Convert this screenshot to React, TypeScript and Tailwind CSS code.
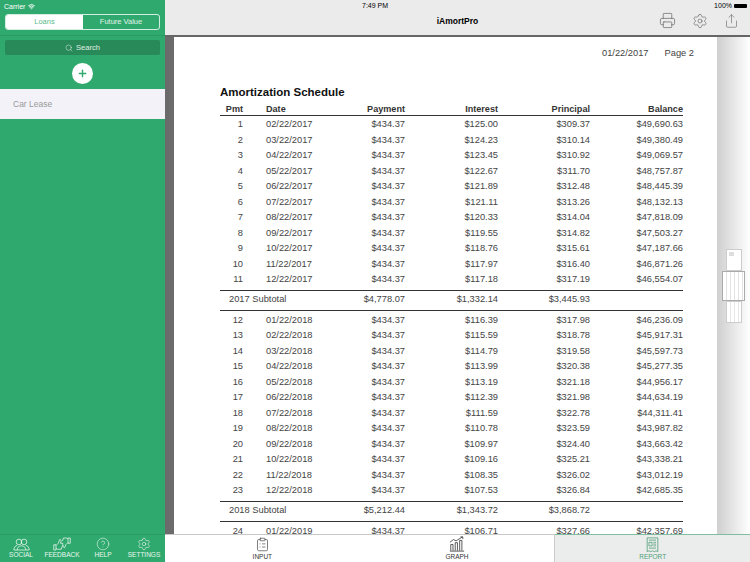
import React from "react";
import { ClipboardList, CircleHelp, Plus, Printer, Search, Settings, Share, Wifi } from "lucide-react";

type Row = [string, string, string, string, string, string];

const rows2017: Row[] = [
  ["1", "02/22/2017", "$434.37", "$125.00", "$309.37", "$49,690.63"],
  ["2", "03/22/2017", "$434.37", "$124.23", "$310.14", "$49,380.49"],
  ["3", "04/22/2017", "$434.37", "$123.45", "$310.92", "$49,069.57"],
  ["4", "05/22/2017", "$434.37", "$122.67", "$311.70", "$48,757.87"],
  ["5", "06/22/2017", "$434.37", "$121.89", "$312.48", "$48,445.39"],
  ["6", "07/22/2017", "$434.37", "$121.11", "$313.26", "$48,132.13"],
  ["7", "08/22/2017", "$434.37", "$120.33", "$314.04", "$47,818.09"],
  ["8", "09/22/2017", "$434.37", "$119.55", "$314.82", "$47,503.27"],
  ["9", "10/22/2017", "$434.37", "$118.76", "$315.61", "$47,187.66"],
  ["10", "11/22/2017", "$434.37", "$117.97", "$316.40", "$46,871.26"],
  ["11", "12/22/2017", "$434.37", "$117.18", "$317.19", "$46,554.07"],
];

const rows2018: Row[] = [
  ["12", "01/22/2018", "$434.37", "$116.39", "$317.98", "$46,236.09"],
  ["13", "02/22/2018", "$434.37", "$115.59", "$318.78", "$45,917.31"],
  ["14", "03/22/2018", "$434.37", "$114.79", "$319.58", "$45,597.73"],
  ["15", "04/22/2018", "$434.37", "$113.99", "$320.38", "$45,277.35"],
  ["16", "05/22/2018", "$434.37", "$113.19", "$321.18", "$44,956.17"],
  ["17", "06/22/2018", "$434.37", "$112.39", "$321.98", "$44,634.19"],
  ["18", "07/22/2018", "$434.37", "$111.59", "$322.78", "$44,311.41"],
  ["19", "08/22/2018", "$434.37", "$110.78", "$323.59", "$43,987.82"],
  ["20", "09/22/2018", "$434.37", "$109.97", "$324.40", "$43,663.42"],
  ["21", "10/22/2018", "$434.37", "$109.16", "$325.21", "$43,338.21"],
  ["22", "11/22/2018", "$434.37", "$108.35", "$326.02", "$43,012.19"],
  ["23", "12/22/2018", "$434.37", "$107.53", "$326.84", "$42,685.35"],
];

const GRID = "grid grid-cols-[23px_100px_62px_93px_92px_93px]";

const ScheduleRow = ({ row }: { row: Row }) => (
  <div className={`${GRID} h-[15.5px] items-center text-[9.3px] leading-none text-[#444]`}>
    <div className="text-right">{row[0]}</div>
    <div className="pl-[23px]">{row[1]}</div>
    <div className="text-right">{row[2]}</div>
    <div className="text-right">{row[3]}</div>
    <div className="text-right">{row[4]}</div>
    <div className="text-right">{row[5]}</div>
  </div>
);

const Subtotal = ({ label, payment, interest, principal }: { label: string; payment: string; interest: string; principal: string }) => (
  <div className={`${GRID} my-[2px] h-[21px] items-center border-y border-[#333] text-[9.3px] leading-none text-[#444]`}>
    <div className="col-span-2 pl-[9px]">{label}</div>
    <div className="text-right">{payment}</div>
    <div className="text-right">{interest}</div>
    <div className="text-right">{principal}</div>
  </div>
);

const SocialIcon = () => (
  <svg viewBox="0 0 20 15" className="h-[13px] w-[17px]" fill="none" stroke="currentColor" strokeWidth="0.9">
    <circle cx="7" cy="4.500" r="3.300" />
    <circle cx="13" cy="4.500" r="3.300" />
    <path d="M1 14c0-3.500 2-5 4-5.500M19 14c0-3.500-2-5-4-5.500M5 14c0-3 1.500-4.500 5-5 3.500.5 5 2 5 5" />
    <path d="M1 14h18" />
  </svg>
);

const FeedbackIcon = () => (
  <svg viewBox="0 0 24 18" className="h-[14px] w-[18px]" fill="none" stroke="currentColor" strokeWidth="1" strokeLinejoin="round">
    <path d="M1 10h3v7H1zM4 11l3-3 2-5c1.500 0 2 1 1.500 3l-.5 2h3v2l-2 6H6l-2-1" />
    <path d="M23 8h-3V1h3zM20 7l-3 3-1.500 4c-1.500 0-2-1-1.500-3" />
    <path d="M20 2l-2-1h-4l-1.500 4" />
  </svg>
);

const GraphIcon = () => (
  <svg viewBox="0 0 18 18" className="h-[16px] w-[16px]" fill="none" stroke="#333" strokeWidth="0.9">
    <path d="M1 17h16M2 16.500v-7h2.500v7M7 16.500v-9h2.500v9M12 16.500V5h2.500v11.500" />
    <path d="M1 7l4-3 3 1.500L15 1" />
    <path d="M13 1h2.500v2.500" />
  </svg>
);

const ReportIcon = () => (
  <svg viewBox="0 0 14 18" className="h-[16px] w-[13px]" fill="none" stroke="#4f9d78" strokeWidth="0.9">
    <path d="M1 1h12v15.500l-2-1-2 1-2-1-2 1-2-1-2 1z" />
    <path d="M3 3.500h8M3 6h3.500v4H3zM8 6h3M8 8h3M8 10h3M3 12.500h8" />
  </svg>
);

const SideTab = ({ icon, label }: { icon: React.ReactNode; label: string }) => (
  <div className="flex w-[41px] flex-col items-center">
    <div className="flex h-[14px] items-center">{icon}</div>
    <span className="mt-[1px] text-[6.5px] leading-none">{label}</span>
  </div>
);

export default function App() {
  return (
    <div className="flex h-[562px] w-[750px] overflow-hidden bg-white font-['Liberation_Sans',Arial,sans-serif]">
      {/* Left panel */}
      <aside className="flex w-[165px] shrink-0 flex-col bg-[#2fa96d] text-white">
        <div className="flex h-[13px] items-center gap-[3px] pl-[4px] text-[7px] leading-none">
          Carrier <Wifi className="h-[7px] w-[7px]" strokeWidth={3} />
        </div>
        <div className="mx-[5px] mt-px flex h-[16px] rounded-[3px] border border-white/80 text-[7.5px] leading-none">
          <div className="flex w-[77px] items-center justify-center rounded-l-[2px] bg-white text-[#5cbb8c]">Loans</div>
          <div className="flex flex-1 items-center justify-center text-white/85">Future Value</div>
        </div>
        <div className="mt-[5px] border-t border-[#2a9c63] px-[5px] pt-[4px]">
          <div className="flex h-[15px] items-center justify-center gap-[3px] rounded-[2px] bg-[#288a58] text-[7.5px] leading-none text-white/85">
            <Search className="h-[8px] w-[8px]" strokeWidth={1.5} /> Search
          </div>
        </div>
        <div className="flex h-[34px] items-center justify-center pt-[3px]">
          <div className="flex h-[21px] w-[21px] items-center justify-center rounded-full bg-white text-[#2fa96d]">
            <Plus className="h-[11px] w-[11px]" strokeWidth={3} />
          </div>
        </div>
        <div className="flex h-[30px] items-center bg-[#f2f2f8] pl-[13px] text-[8.5px] leading-none text-[#9a9a9a]">Car Lease</div>
        <div className="flex-1" />
        <nav className="flex h-[28px] items-start justify-center border-t border-[#2a9c63] pt-[2px] text-white/90">
          <SideTab icon={<SocialIcon />} label="SOCIAL" />
          <SideTab icon={<FeedbackIcon />} label="FEEDBACK" />
          <SideTab icon={<CircleHelp className="h-[14px] w-[14px]" strokeWidth={1} />} label="HELP" />
          <SideTab icon={<Settings className="h-[14px] w-[14px]" strokeWidth={1} />} label="SETTINGS" />
        </nav>
      </aside>

      {/* Right area */}
      <main className="flex min-w-0 flex-1 flex-col">
        <header className="flex h-[37px] shrink-0 flex-col border-b-2 border-[#666] bg-[#ebebeb] text-black">
          <div className="flex h-[11px] items-center justify-between pr-[3px] text-[7px] leading-none">
            <span className="pl-[197px]">7:49 PM</span>
            <div className="flex items-center gap-[2px]">
              100%
              <span className="h-[4px] w-[13px] rounded-[1px] bg-black" />
            </div>
          </div>
          <div className="relative flex flex-1 items-center justify-center pb-[3px]">
            <span className="text-[8.5px] font-bold leading-none">iAmortPro</span>
            <div className="absolute right-[11px] top-[1px] flex items-center gap-[16px] text-[#666]">
              <Printer className="h-[17px] w-[17px]" strokeWidth={1} />
              <Settings className="h-[16px] w-[16px]" strokeWidth={1} />
              <Share className="h-[16px] w-[15px]" strokeWidth={1} />
            </div>
          </div>
        </header>

        <div className="flex min-h-0 flex-1 overflow-hidden">
          <div className="w-[9px] shrink-0 bg-[#6b6b6b]" />
          <div className="w-[543px] shrink-0 overflow-hidden bg-white pl-[46px]">
            <div className="flex h-[21px] w-[474px] items-end justify-end gap-[16px] text-[9.3px] leading-none text-[#444]">
              <span>01/22/2017</span>
              <span>Page 2</span>
            </div>
            <h1 className="mt-[29px] text-[11.5px] font-bold leading-none text-[#111]">Amortization Schedule</h1>
            <div className="w-[463px]">
              <div className={`${GRID} mt-[5.5px] h-[11.5px] items-center border-b border-[#333] text-[9.1px] font-bold leading-none text-[#333]`}>
                <div className="whitespace-nowrap text-right">Pmt</div>
                <div className="pl-[23px]">Date</div>
                <div className="text-right">Payment</div>
                <div className="text-right">Interest</div>
                <div className="text-right">Principal</div>
                <div className="text-right">Balance</div>
              </div>
              <div className="pt-[1.5px]">
                {rows2017.map((r) => (
                  <ScheduleRow key={r[0]} row={r} />
                ))}
              </div>
              <Subtotal label="2017 Subtotal" payment="$4,778.07" interest="$1,332.14" principal="$3,445.93" />
              {rows2018.map((r) => (
                <ScheduleRow key={r[0]} row={r} />
              ))}
              <Subtotal label="2018 Subtotal" payment="$5,212.44" interest="$1,343.72" principal="$3,868.72" />
              <ScheduleRow row={["24", "01/22/2019", "$434.37", "$106.71", "$327.66", "$42,357.69"]} />
            </div>
          </div>
          {/* Page thumbnails */}
          <div className="flex flex-1 flex-col items-center justify-center bg-gradient-to-r from-[#cfcfcf] to-white">
            <div className="h-[22px] w-[16px] border border-[#ccc] bg-white p-[2px]">
              <div className="h-[4px] w-[5px] bg-[#ddd]" />
            </div>
            <div className="h-[30px] w-[23px] border border-[#aaa] bg-[repeating-linear-gradient(90deg,#fff_0,#fff_3px,#e2e2e2_3px,#e2e2e2_4px)]" />
            <div className="h-[22px] w-[16px] border border-[#ccc] bg-[repeating-linear-gradient(90deg,#fff_0,#fff_3px,#e8e8e8_3px,#e8e8e8_4px)]" />
          </div>
        </div>

        <nav className="relative flex h-[28px] shrink-0 border-t border-[#c8c8c8] bg-white text-[6.5px] leading-none">
          <div className="flex flex-1 flex-col items-center pt-[1px] text-[#333]">
            <ClipboardList className="h-[17px] w-[15px]" strokeWidth={1} />
            <span className="mt-[1px]">INPUT</span>
          </div>
          <div className="flex flex-1 flex-col items-center border-r border-[#ccc] pt-[1px] text-[#333]">
            <GraphIcon />
            <span className="mt-[2px]">GRAPH</span>
          </div>
          <div className="-mt-px flex flex-1 flex-col items-center border-t border-[#7fbf9f] bg-[#ebedec] pt-[2px] text-[#4f9d78]">
            <ReportIcon />
            <span className="mt-[1px]">REPORT</span>
          </div>
        </nav>
      </main>
    </div>
  );
}
